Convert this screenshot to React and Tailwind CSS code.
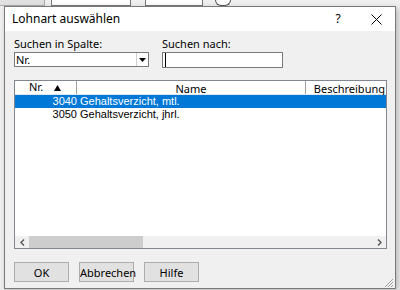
import { useState } from 'react'

const rows = [
  { nr: '3040', name: 'Gehaltsverzicht, mtl.', selected: true },
  { nr: '3050', name: 'Gehaltsverzicht, jhrl.', selected: false },
]

function ChevronDown() {
  return (
    <svg width="7" height="4" viewBox="0 0 7 4">
      <path d="M0 0h7L3.5 4z" fill="#000" />
    </svg>
  )
}

export default function App() {
  const [query, setQuery] = useState('')

  return (
    <div className="w-[400px] h-[290px] bg-[#f0f0f0] overflow-hidden relative text-[11px] text-black" style={{ fontFamily: '"Noto Sans", "Liberation Sans", sans-serif' }}>
      {/* background app strip */}
      <div className="flex h-[6px] gap-[6px] items-end">
        <div className="w-[45px] h-[6px] border-r border-b border-[#adadad] bg-[#e1e1e1]" />
        <div className="w-[80px] h-[6px] border-x border-b border-[#7a7a7a] bg-white" />
        <div className="w-[58px] h-[6px] border-x border-b border-[#7a7a7a] bg-white ml-[8px]" />
        <div className="w-[16px] h-[6px] rounded-b-full border border-t-0 border-[#555] bg-white ml-[6px]" />
      </div>

      <div className="flex">
        <div className="w-[4px] bg-[#f0f0f0]" />
        {/* dialog */}
        <div className="w-[392px] h-[283px] border border-[#7a7a7a] bg-[#f0f0f0] flex flex-col shadow-[2px_2px_6px_rgba(0,0,0,0.25)]">
          <div className="h-[24px] bg-white flex items-center pl-[7px] pr-[12px] shrink-0">
            <span className="text-[12px] flex-1">Lohnart auswählen</span>
            <span className="text-[12px] w-[20px] text-center mr-[23px]">?</span>
            <svg width="11" height="11" viewBox="0 0 11 11" className="mr-[1px]">
              <path d="M0.5 0.5l10 10M10.5 0.5l-10 10" stroke="#000" strokeWidth="1" />
            </svg>
          </div>

          <div className="flex-1 flex flex-col px-[9px] pt-[6px] pb-[7px]">
            <div className="flex gap-[13px]">
              <div className="flex flex-col">
                <span className="h-[14px] leading-[14px]">Suchen in Spalte:</span>
                <div className="mt-[1px] w-[135px] h-[15px] bg-white border border-[#7a7a7a] flex items-center">
                  <span className="flex-1 pl-[1px] leading-none">Nr.</span>
                  <div className="w-[12px] h-[13px] border-l border-[#cfcfcf] flex items-center justify-center">
                    <ChevronDown />
                  </div>
                </div>
              </div>
              <div className="flex flex-col">
                <span className="h-[14px] leading-[14px]">Suchen nach:</span>
                <div className="mt-[1px] w-[121px] h-[16px] bg-white border border-[#7a7a7a] flex items-center pl-[2px]">
                  <input
                    value={query}
                    onChange={(e) => setQuery(e.target.value)}
                    className="w-full h-full outline-none border-l border-black bg-transparent text-[11px]"
                  />
                </div>
              </div>
            </div>

            {/* list view */}
            <div className="mt-[12px] w-[373px] h-[169px] bg-white border border-[#828790] flex flex-col">
              <div className="flex h-[14px] border-b border-[#e5e5e5] shrink-0">
                <div className="w-[62px] flex items-center border-r border-[#a0a0a0] pl-[14px]">
                  <span className="flex-1">Nr.</span>
                  <svg width="7" height="6" viewBox="0 0 7 6" className="mr-[15px]">
                    <path d="M3.5 0L7 6H0z" fill="#000" />
                  </svg>
                </div>
                <div className="w-[229px] text-center border-r border-[#a0a0a0]">Name</div>
                <div className="flex-1 text-right pr-[1px]">Beschreibung</div>
              </div>
              <div className="flex-1 flex flex-col font-['Liberation_Sans',sans-serif]">
                {rows.map((r) => (
                  <div
                    key={r.nr}
                    className={`flex h-[13px] leading-[13px] overflow-hidden ${r.selected ? 'bg-[#0078d7] text-white' : ''}`}
                  >
                    <span className="w-[62px] text-right">{r.nr}</span>
                    <span className="pl-[3px]">{r.name}</span>
                  </div>
                ))}
              </div>
              <div className="h-[12px] bg-[#f0f0f0] flex items-center shrink-0">
                <span className="w-[14px] flex justify-center">
                  <svg width="5" height="7" viewBox="0 0 5 7"><path d="M4 0.5L1 3.5L4 6.5" stroke="#555" strokeWidth="1.4" fill="none" /></svg>
                </span>
                <div className="w-[114px] h-[12px] bg-[#cdcdcd]" />
                <div className="flex-1" />
                <span className="w-[14px] flex justify-center">
                  <svg width="5" height="7" viewBox="0 0 5 7"><path d="M1 0.5L4 3.5L1 6.5" stroke="#555" strokeWidth="1.4" fill="none" /></svg>
                </span>
              </div>
            </div>

            <div className="mt-[13px] flex gap-[10px] items-end">
              {['OK', 'Abbrechen', 'Hilfe'].map((b) => (
                <button
                  key={b}
                  className="w-[55px] h-[20px] bg-[#e1e1e1] border border-[#adadad] text-[11px] leading-none"
                >
                  {b}
                </button>
              ))}
              <div className="flex-1" />
              <svg width="12" height="12" viewBox="0 0 12 12" className="mb-[-6px] mr-[-8px]">
                <path d="M11 3L3 11M11 6L6 11M11 9L9 11" stroke="#a0a0a0" strokeWidth="1" />
              </svg>
            </div>
          </div>
        </div>
      </div>
    </div>
  )
}
